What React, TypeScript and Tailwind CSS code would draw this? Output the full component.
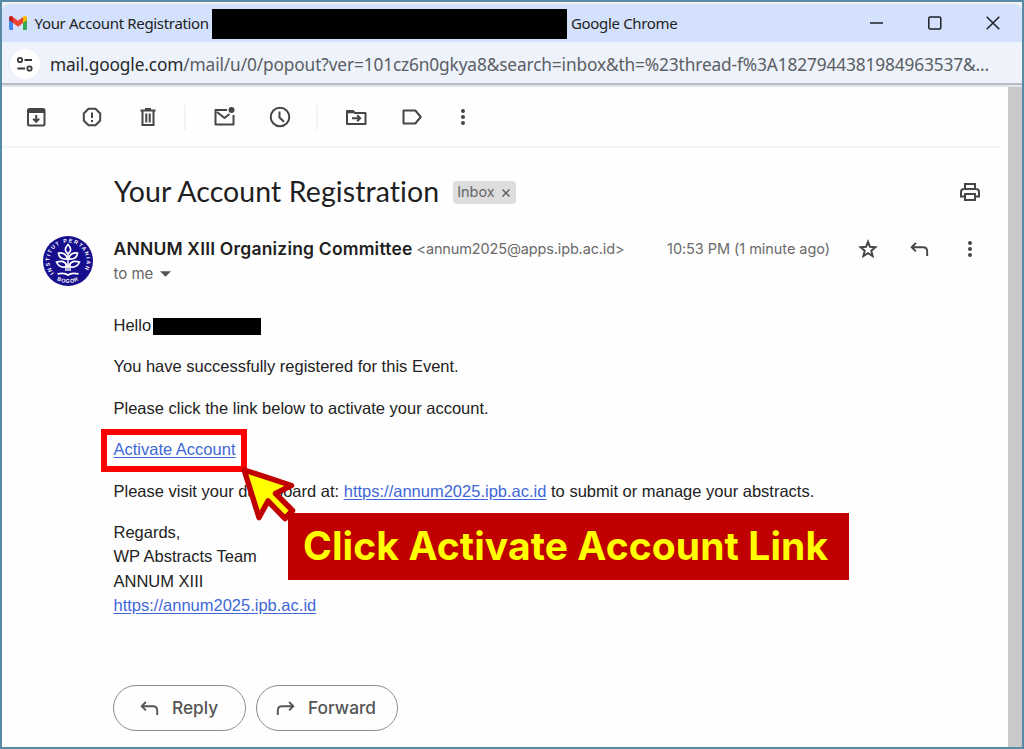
import type { ReactNode } from "react";

function Icon({ children, className = "" }: { children: ReactNode; className?: string }) {
  return (
    <svg viewBox="0 0 24 24" fill="none" stroke="currentColor" strokeWidth="2" className={"h-6 w-6 shrink-0 " + className}>
      {children}
    </svg>
  );
}

function Dots() {
  return (
    <Icon>
      <g fill="currentColor" stroke="none">
        <circle cx="12" cy="6" r="2" />
        <circle cx="12" cy="12" r="2" />
        <circle cx="12" cy="18" r="2" />
      </g>
    </Icon>
  );
}

function ReplyArrow({ className = "" }: { className?: string }) {
  return (
    <Icon className={className}>
      <path d="M7.900 6 3.700 10.200l4.200 4.200M3.700 10.200h11.300c3 0 4.200 1.600 4.200 4.300v4.500" strokeWidth="1.900" />
    </Icon>
  );
}

function Crest() {
  return (
    <svg viewBox="0 0 50 50" className="h-[50px] w-[50px] shrink-0">
      <defs>
        <path id="ring" d="M11 37.100A18.500 18.500 0 1 1 39 37.100" />
        <path id="base" d="M4.500 33A22 22 0 0 0 45.500 33" />
      </defs>
      <circle cx="25" cy="25" r="25" fill="#160e8c" />
      <text fill="#fff" className="font-['Liberation_Sans'] text-[5.4px] font-bold tracking-[1.3px]">
        <textPath href="#ring">INSTITUT PERTANIAN</textPath>
      </text>
      <text fill="#fff" textAnchor="middle" className="font-['Liberation_Sans'] text-[5.4px] font-bold tracking-[0.6px]">
        <textPath href="#base" startOffset="50%">BOGOR</textPath>
      </text>
      <g fill="#160e8c" stroke="#fff" strokeWidth="1.700">
        <path d="M25 8.500c-3.600 3.800-3.600 6.500 0 9.500c3.600-3 3.600-5.700 0-9.500z" />
        <path d="M24.500 23c-1-4.500-4-6.500-9-6c.5 4.500 4 6.500 9 6zM25.500 23c1-4.500 4-6.500 9-6c-.5 4.500-4 6.500-9 6z" />
        <path d="M24.500 30.500c-1.500-4.500-5.500-6-11-4.500c2 4.500 6 6 11 4.500zM25.500 30.500c1.500-4.500 5.500-6 11-4.500c-2 4.500-6 6-11 4.500z" />
      </g>
      <path d="M25 17v18M22.900 28v7M27.100 28v7" stroke="#fff" strokeWidth="1.400" />
      <path d="M14.500 37.800c4-.8 8-.8 10.500 1.200c2.500-2 6.500-2 10.500-1.200" fill="none" stroke="#fff" strokeWidth="1.800" />
    </svg>
  );
}

const link = "text-[#3f68d8] underline underline-offset-[2px]";

export default function App() {
  return (
    <div className="relative flex h-[749px] w-[1024px] flex-col overflow-hidden border-2 border-[#568aa5] bg-[#f1f1f0] pt-[2px] font-['Liberation_Sans',sans-serif] text-[#222]">
      <header className="flex h-[38px] shrink-0 items-center rounded-t-[7px] bg-[#d3e1fd] pl-[7px] font-['Noto_Sans',sans-serif] text-[15px] tracking-[-0.33px] whitespace-nowrap">
        <svg viewBox="0 0 18 14" className="h-[14px] w-[18px] shrink-0">
          <path d="M0 2v10.500c0 .8.6 1.500 1.400 1.500H4V6z" fill="#4285f4" />
          <path d="M14 6v8h2.600c.8 0 1.400-.7 1.400-1.500V2z" fill="#34a853" />
          <path d="M14 1v6l4-3V2c0-2-2.200-2.500-3.600-1.400z" fill="#fbbc04" />
          <path d="M0 2v2l4 3V1L3.600.6C2.200-.5 0 0 0 2z" fill="#c5221f" />
          <path d="M4 1v6l5 3.800L14 7V1L9 4.800z" fill="#ea4335" />
        </svg>
        <span className="ml-[7.5px] w-[177.5px]">Your Account Registration</span>
        <span className="mt-[2px] h-[30px] w-[355px] bg-black" />
        <span className="ml-[4px]">Google Chrome</span>
        <span className="ml-auto flex items-center gap-[34px] pr-[17px] text-[#1c1f26]">
          <Icon><path d="M5 12h13" strokeWidth="1.500" /></Icon>
          <Icon><rect x="5.800" y="6" width="12" height="12" rx="1.500" strokeWidth="1.500" /></Icon>
          <Icon><path d="m5.700 5.700 12.600 12.600m0-12.600L5.700 18.300" strokeWidth="1.500" /></Icon>
        </span>
      </header>
      <div className="flex h-[41px] shrink-0 items-center bg-[#edf2fb] pl-[8px] font-['Noto_Sans',sans-serif] text-[17.3px] tracking-[-0.135px] whitespace-nowrap text-[#5b5e63]">
        <span className="mt-[3px] flex h-[30px] w-[30px] shrink-0 items-center justify-center rounded-full bg-white text-[#36383b]">
          <Icon>
            <circle cx="7" cy="8" r="2.200" strokeWidth="1.800" />
            <path d="M11.500 8H19M4.500 16.500H12" strokeWidth="1.800" />
            <circle cx="16.500" cy="16.500" r="2.200" strokeWidth="1.800" />
          </Icon>
        </span>
        <span className="mt-[4px] ml-[10px]"><span className="text-[#26282b]">mail.google.com</span>/mail/u/0/popout?ver=101cz6n0gkya8&amp;search=inbox&amp;th=%23thread-f%3A1827944381984963537&amp;...</span>
      </div>
      <div className="h-[4px] shrink-0 border-t-2 border-[#b9bbc0] bg-[#e4e5ea]" />
      <div className="flex min-h-0 flex-1">
        <main className="flex w-[1006px] flex-col bg-[#fefefe]">
          <div className="mr-[8px] flex h-[61px] shrink-0 items-center border-b-2 border-[#eff5fa] pt-[1px] pl-[22px] text-[#444746]">
            <Icon>
              <rect x="4" y="4" width="16.500" height="16.500" rx="1.500" />
              <path d="M4 6.500h16.500" strokeWidth="3" />
              <path d="M12.200 10v6.500M9.200 13.800l3 3 3-3" />
            </Icon>
            <Icon className="ml-[32px]">
              <path d="M8.500 3.800h7l4.700 4.700v7l-4.700 4.700h-7l-4.700-4.700v-7z" />
              <path d="M12 7.500v5.500M12 15v2" />
            </Icon>
            <Icon className="ml-[32px]">
              <path d="M4.500 5.500h15M9 4h6M6.500 6v14h11V6M10.300 8.500v9M13.700 8.500v9" />
            </Icon>
            <span className="ml-[24px] h-[25px] w-[2px] bg-[#eff4f8]" />
            <Icon className="ml-[26px]">
              <path d="M15 5H3.500v14.500h18V10M5 7l7.500 6 5-4" strokeLinejoin="round" />
              <circle cx="19.500" cy="5" r="3" fill="currentColor" stroke="none" />
            </Icon>
            <Icon className="ml-[32px]">
              <circle cx="12" cy="12" r="9.300" />
              <path d="M11.500 6.500v6l4.500 4.200" />
            </Icon>
            <span className="ml-[24px] h-[25px] w-[2px] bg-[#eff4f8]" />
            <Icon className="ml-[26px]">
              <path d="M3 19V6h6l2 2h10.500v11z" strokeLinejoin="round" />
              <path d="M2.500 6.800h7" strokeWidth="3" />
              <path d="M8 13.300h8M13.200 10.300l3 3-3 3" />
            </Icon>
            <Icon className="ml-[32px]">
              <path d="M3.500 5.500h11.800l5.500 6.500-5.500 6.500H3.500z" strokeLinejoin="round" />
            </Icon>
            <span className="ml-[27px]"><Dots /></span>
          </div>
          <div className="mt-[27px] flex h-[34px] shrink-0 items-center pl-[112px]">
            <h1 className="mt-[-2px] font-['Lato',sans-serif] text-[28.5px] leading-[34px] tracking-[0.08px] whitespace-nowrap text-[#1f1f1f]">Your Account Registration</h1>
            <span className="ml-[14px] flex h-[23px] w-[63px] items-center rounded-[4px] bg-[#dddddd] pl-[4px] font-['Inter',sans-serif] text-[14.5px] text-[#666]">
              Inbox
              <svg viewBox="0 0 8 8" className="mt-[2px] ml-[7px] h-2 w-2" stroke="#555" strokeWidth="1.300"><path d="m.5.5 7 7m0-7-7 7" /></svg>
            </span>
            <Icon className="ml-auto mr-[26px] text-[#444746]">
              <path d="M7 8.500V4h10v4.500M6.500 16.500H3V12c0-2 1-3 3-3h12c2 0 3 1 3 3v4.500h-3.500M7 14h10v6H7z" />
            </Icon>
          </div>
          <div className="mt-[27px] flex h-[50px] shrink-0 pl-[41px]">
            <Crest />
            <div className="ml-[20.5px] flex min-w-0 flex-1 flex-col">
              <div className="flex h-[26px] items-center font-['Inter',sans-serif] text-[14.5px] whitespace-nowrap text-[#6a6a6a]">
                <span className="text-[17.5px] font-semibold tracking-[0.19px] text-[#1f1f1f]">ANNUM XIII Organizing Committee</span>
                <span className="ml-[4px] tracking-[-0.14px]">&lt;annum2025@apps.ipb.ac.id&gt;</span>
                <span className="ml-auto tracking-[-0.05px]">10:53 PM (1 minute ago)</span>
                <Icon className="ml-[26px] text-[#444746]">
                  <path d="m12 4.800 2 5 5.400.4-4.100 3.500 1.300 5.300-4.600-2.900L7.400 19l1.300-5.300-4.100-3.500 5.400-.4z" />
                </Icon>
                <ReplyArrow className="ml-[28px] text-[#444746]" />
                <span className="mr-[26px] ml-[26px] text-[#444746]"><Dots /></span>
              </div>
              <div className="flex h-[24px] items-center font-['Inter',sans-serif] text-[15px] text-[#666]">
                to me
                <svg viewBox="0 0 10 5" className="ml-[7px] h-[6px] w-[11px]"><path d="M0 0h10L5 5z" fill="#555" /></svg>
              </div>
            </div>
          </div>
          <div className="mt-[27px] flex flex-col gap-[16.9px] pl-[111.5px] text-[16.5px] leading-[24.5px] whitespace-nowrap">
            <p className="flex items-center">Hello<span className="mt-[2px] ml-[2px] h-[17px] w-[108px] bg-black" /></p>
            <p>You have successfully registered for this Event.</p>
            <p>Please click the link below to activate your account.</p>
            <p><a className={link}>Activate Account</a></p>
            <p>Please visit your dashboard at: <a className={link}>https://annum2025.ipb.ac.id</a> to submit or manage your abstracts.</p>
            <p>Regards,<br />WP Abstracts Team<br />ANNUM XIII<br /><a className={link}>https://annum2025.ipb.ac.id</a></p>
          </div>
          <div className="mt-auto mb-[16px] flex gap-[10px] pl-[111px] font-['Inter',sans-serif] text-[17.3px] font-medium text-[#555]">
            <span className="flex h-[46px] w-[133px] items-center rounded-full border-[1.5px] border-[#8a8a8a] pl-[24px]">
              <ReplyArrow /><span className="ml-[10px]">Reply</span>
            </span>
            <span className="flex h-[46px] w-[142px] items-center rounded-full border-[1.5px] border-[#8a8a8a] pl-[16px]">
              <ReplyArrow className="-scale-x-100" /><span className="ml-[11px]">Forward</span>
            </span>
          </div>
        </main>
        <div className="flex-1 bg-[#c9c9c9]" />
      </div>
      <div className="absolute top-[427px] left-[99px] h-[43px] w-[146px] border-[6px] border-[#fe0000]" />
      <svg viewBox="240 464 60 60" className="absolute top-[462px] left-[237px] h-[60px] w-[60px]">
        <path d="M245.200 470 292.500 485.500 276.500 493.500 293.500 510.500 286 518.500 269 501 260 517.500z" fill="#ff0" stroke="#c00000" strokeWidth="5.500" strokeLinejoin="round" />
      </svg>
      <div className="absolute top-[511px] left-[286px] flex h-[67px] w-[561px] items-center bg-[#c00000] pl-[15px] font-['Inter',sans-serif] text-[39px] font-bold tracking-[0.1px] whitespace-nowrap text-[#ff0]">
        Click Activate Account Link
      </div>
    </div>
  );
}
